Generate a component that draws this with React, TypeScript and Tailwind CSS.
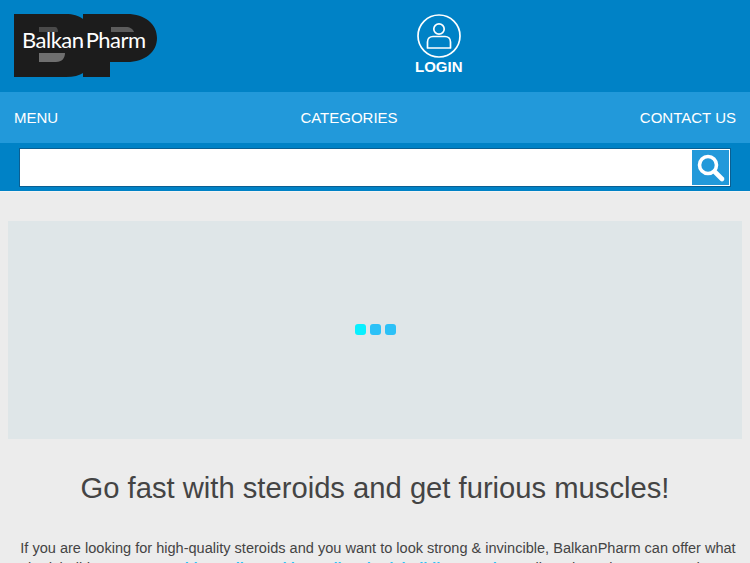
const navItems = ["MENU", "CATEGORIES", "CONTACT US"];

function Logo() {
  return (
    <div className="relative h-[64px] w-[144px]">
      <svg width="144" height="64" viewBox="0 0 144 64" className="block">
        <path
          d="M0 0H52C66 0 75 7 75 17C75 24 71 28 66 31C72 34 76 39 76 46C76 57 67 63 52 63H0Z"
          fill="#1c1c1c"
        />
        <path
          d="M69 0H113C131 0 143 10 143 24C143 38 131 48 113 48H96V63H69Z"
          fill="#1c1c1c"
        />
        <path d="M25 13H41C43 13 44 15 44 18H25Z" fill="#4a4a4a" />
        <path d="M97 13H112C116 13 119 15 120 18H97Z" fill="#5c5c5c" />
        <path d="M25 39H51C51 44 48 48 42 48H25Z" fill="#6f6f6f" />
      </svg>
      <span className="absolute left-[8px] top-[13px] text-[22px] leading-[26px] tracking-[-0.5px] [word-spacing:-3px] text-white font-[Lato,'Liberation_Sans',sans-serif]">
        Balkan Pharm
      </span>
    </div>
  );
}

function LoginIcon() {
  return (
    <svg width="44" height="44" viewBox="0 0 44 44" fill="none" stroke="white" strokeWidth="1.7" className="block">
      <circle cx="22" cy="22" r="21" />
      <circle cx="22" cy="15" r="5.2" />
      <path d="M10.5 34V28C10.5 24.5 13 22.5 16 22.5H28C31 22.5 33.5 24.5 33.5 28V34Z" strokeLinejoin="round" />
    </svg>
  );
}

export default function App() {
  return (
    <div className="h-[563px] overflow-hidden bg-[#ececec] font-['Liberation_Sans',Arial,sans-serif]">
      <header className="flex h-[92px] items-start bg-[#0082c6] pl-[14px] pt-[14px]">
        <Logo />
        <div className="ml-[257px] flex flex-col items-center">
          <LoginIcon />
          <span className="text-[15px] font-bold leading-[17px] text-white">LOGIN</span>
        </div>
      </header>
      <nav className="flex h-[51px] items-center justify-between bg-[#2299da] px-[14px] pt-[1px] text-[15px] text-white">
        {navItems.map((item) => (
          <span key={item}>{item}</span>
        ))}
      </nav>
      <div className="h-[49px] border-b border-b-[#f4f4f4] bg-[#0082c6] px-[19px] pt-[5px]">
        <div className="flex h-[39px] border border-[#0b5f92] bg-white p-px">
          <input className="min-w-0 flex-1 bg-white outline-none" aria-label="Search" />
          <button className="flex w-[37px] items-center justify-center bg-[#2299da]">
            <svg width="30" height="30" viewBox="0 0 30 30" fill="none" stroke="white" strokeLinecap="round">
              <circle cx="12" cy="12" r="8.5" strokeWidth="3.6" />
              <path d="M19 19L26 26" strokeWidth="4.6" />
            </svg>
          </button>
        </div>
      </div>
      <main className="px-[8px] pt-[29px]">
        <div className="flex h-[218px] items-center justify-center gap-[4px] bg-[#dfe6e8] pb-[1px]">
          <span className="size-[11px] rounded-[3px] bg-[#08f0ff]" />
          <span className="size-[11px] rounded-[3px] bg-[#2cc1f7]" />
          <span className="size-[11px] rounded-[3px] bg-[#2cc1f7]" />
        </div>
        <h1 className="mt-[31px] text-center text-[29.2px] font-normal leading-[36px] text-[#444444]">
          Go fast with steroids and get furious muscles!
        </h1>
        <p className="mt-[32px] pl-[11px] pr-[5px] text-center text-[14.55px] leading-[20px] text-[#444444]">
          If you are looking for high-quality steroids and you want to look strong &amp; invincible, BalkanPharm can offer what
          bodybuilders want <strong className="text-[#2cc1f7]">steroids quality and immediate bodybuilding results.</strong> BalkanPharm is a very good one
        </p>
      </main>
    </div>
  );
}
